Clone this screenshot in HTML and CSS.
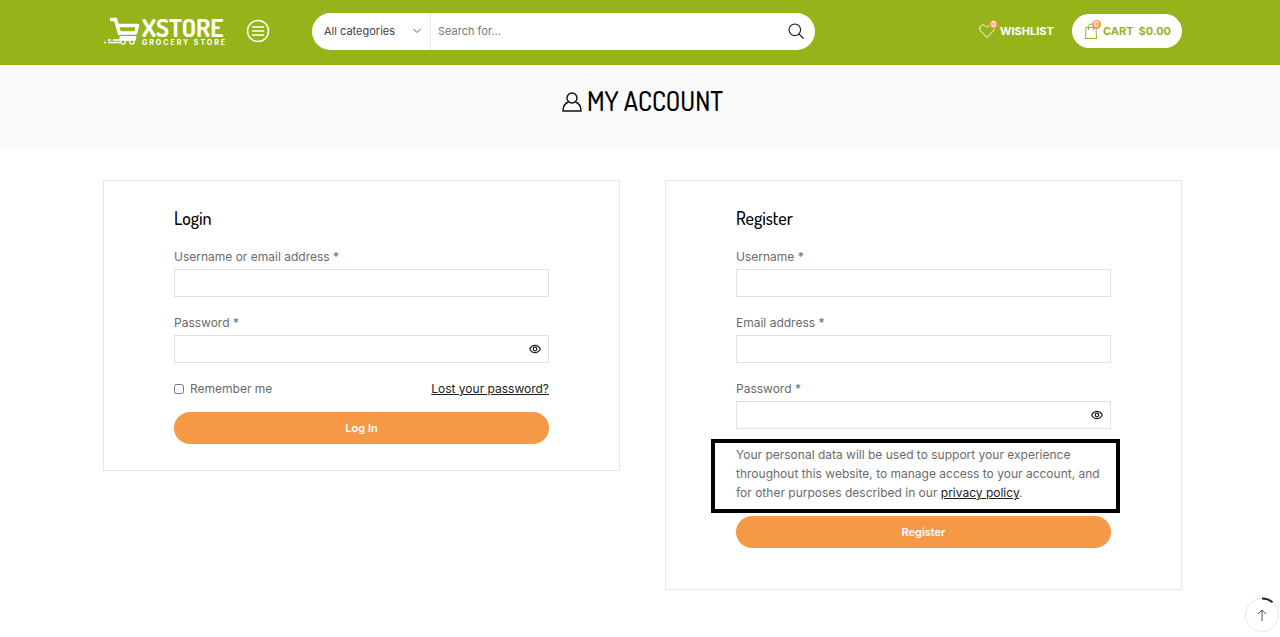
FILE: index.html
```html
<!DOCTYPE html>
<html lang="en">
<head>
    <meta charset="UTF-8">
    <meta name="viewport" content="width=device-width, initial-scale=1.0">
    <title>My Account</title>
    <link rel="stylesheet" href="styles.css">
</head>
<body>
    <header class="header">
        <a href="#" class="logo">
            <svg class="logo-cart" width="39" height="30" viewBox="0 0 39 30" fill="none" stroke="#fff">
                <path d="M7 3.500h5.500L17 19" stroke-width="3.500"/>
                <path d="M14.500 9.500h20l-2 7.500H17" stroke-width="3.500" stroke-linejoin="round"/>
                <path d="M17 13.300h15" stroke-width="1.500" stroke="#96b41a"/>
                <path d="M17 20.500h16l-1 4H17z" fill="#fff" stroke-width="1"/>
                <path d="M1 26.500h2M5 26.500h12M5 24h3M10 24h8" stroke-width="1.500"/>
                <circle cx="20" cy="26" r="2.200" stroke-width="1.200" fill="#96b41a"/>
                <circle cx="29" cy="26" r="2.200" stroke-width="1.200" fill="#96b41a"/>
            </svg>
            <span class="logo-text">
                <span class="logo-name">XSTORE</span>
                <span class="logo-tag">GROCERY STORE</span>
            </span>
        </a>

        <button type="button" class="menu-btn" aria-label="Menu">
            <svg width="24" height="24" viewBox="0 0 24 24" fill="none" stroke="#fff" stroke-width="1.500" stroke-linecap="round">
                <circle cx="12" cy="12" r="10.500"/>
                <path d="M6.500 8h11M6.500 12h11M6.500 16h11"/>
            </svg>
        </button>

        <form class="search">
            <select class="category" aria-label="Category">
                <option>All categories</option>
            </select>
            <svg class="chevron" width="8" height="6" viewBox="0 0 8 6" fill="none" stroke="#555">
                <path d="M.5 1L4 4.500 7.500 1"/>
            </svg>
            <input type="text" class="search-field" placeholder="Search for..." aria-label="Search">
            <button type="submit" class="search-btn" aria-label="Search">
                <svg width="16" height="16" viewBox="0 0 16 16" fill="none" stroke="#222" stroke-width="1.200">
                    <circle cx="6.800" cy="6.800" r="5.800"/>
                    <path d="M11 11l4.500 4.500"/>
                </svg>
            </button>
        </form>

        <div class="actions">
            <a href="#" class="wishlist">
                <span class="icon">
                    <svg width="16" height="16" viewBox="0 0 16 16" fill="none" stroke="#fff">
                        <path d="M8 14.500L1.700 8C.2 6.300.3 3.900 1.800 2.800 3.700 1.300 6.300 1.900 8 4.500c1.700-2.600 4.300-3.200 6.200-1.700 1.500 1.100 1.600 3.500.1 5.200z"/>
                    </svg>
                    <span class="badge">0</span>
                </span>
                WISHLIST
            </a>
            <a href="#" class="cart">
                <span class="icon">
                    <svg width="14" height="16" viewBox="0 0 14 16" fill="none" stroke="#96b41a">
                        <path d="M2 4.500h10l.5 11h-11zM4.500 7V3.500a2.500 2.500 0 0 1 5 0V7"/>
                    </svg>
                    <span class="badge">0</span>
                </span>
                <span>CART</span>
                <span>$0.00</span>
            </a>
        </div>
    </header>

    <div class="page-title">
        <svg width="20" height="20" viewBox="0 0 20 20" fill="none" stroke="#111" stroke-width="1.400">
            <circle cx="10" cy="6" r="5"/>
            <path d="M6.500 10C3 11.200 1 14.500 1 19h18c0-4.500-2-7.800-5.500-9"/>
        </svg>
        <h1>MY ACCOUNT</h1>
    </div>

    <main class="columns">
        <form class="card">
            <h2>Login</h2>
            <div class="field">
                <label for="login">Username or email address *</label>
                <input type="text" id="login">
            </div>
            <div class="field">
                <label for="loginPassword">Password *</label>
                <div class="password">
                    <input type="password" id="loginPassword">
                    <button type="button" class="eye" aria-label="Show password">
                        <svg width="12" height="10" viewBox="0 0 12 10" fill="none" stroke="#222" stroke-width="1.200">
                            <path d="M.7 5C3.200.1 8.800.1 11.300 5 8.800 9.900 3.200 9.900.7 5z"/>
                            <circle cx="6" cy="5" r="1.800"/>
                        </svg>
                    </button>
                </div>
            </div>
            <div class="options">
                <label class="remember"><input type="checkbox"> Remember me</label>
                <a href="#">Lost your password?</a>
            </div>
            <button type="submit" class="btn">Log In</button>
        </form>

        <form class="card card-register">
            <h2>Register</h2>
            <div class="field">
                <label for="username">Username *</label>
                <input type="text" id="username">
            </div>
            <div class="field">
                <label for="email">Email address *</label>
                <input type="email" id="email">
            </div>
            <div class="field">
                <label for="password">Password *</label>
                <div class="password">
                    <input type="password" id="password">
                    <button type="button" class="eye" aria-label="Show password">
                        <svg width="12" height="10" viewBox="0 0 12 10" fill="none" stroke="#222" stroke-width="1.200">
                            <path d="M.7 5C3.200.1 8.800.1 11.300 5 8.800 9.900 3.200 9.900.7 5z"/>
                            <circle cx="6" cy="5" r="1.800"/>
                        </svg>
                    </button>
                </div>
            </div>
            <p class="privacy">Your personal data will be used to support your experience throughout this website, to manage access to your account, and for other purposes described in our <a href="#">privacy policy</a>.</p>
            <button type="submit" class="btn">Register</button>
        </form>
    </main>

    <a href="#" class="to-top" aria-label="Back to top">
        <svg width="36" height="36" viewBox="0 0 36 36" fill="none">
            <circle cx="18" cy="18" r="16.500" fill="#fff" stroke="#e6e6e6"/>
            <path d="M18 1.500a16.500 16.500 0 0 1 10.500 3.700" stroke="#222" stroke-width="2"/>
            <path d="M18 24V13M14 17l4-4 4 4" stroke="#555"/>
        </svg>
    </a>
</body>
</html>
```
FILE: styles.css
```css
* {
    box-sizing: border-box;
}

body {
    margin: 0;
    background: #fff;
    color: #6b6b6b;
    font-family: Inter, 'Liberation Sans', sans-serif;
    font-size: 12px;
    line-height: 19px;
}

a {
    color: #222;
}

button {
    border: none;
    padding: 0;
    background: none;
    font-family: inherit;
    cursor: pointer;
}

svg {
    display: block;
}

h1,
h2 {
    margin: 0;
    color: #000;
    font-family: Dosis, Roboto, sans-serif;
    font-weight: 500;
}

.header {
    display: flex;
    align-items: center;
    height: 65px;
    padding: 0 98px 3px 103px;
    background: #96b41a;
}

.logo {
    display: flex;
    align-items: center;
    color: #fff;
    text-decoration: none;
}

.logo-text {
    display: flex;
    flex-direction: column;
    width: 82px;
}

.logo-name {
    font-family: Dosis, Roboto, sans-serif;
    font-size: 25px;
    font-weight: 700;
    line-height: 24px;
}

.logo-tag {
    font-size: 7px;
    font-weight: 700;
    letter-spacing: 2px;
    line-height: 8px;
    white-space: nowrap;
}

.menu-btn {
    margin: 0 42px 0 22px;
}

.search {
    display: flex;
    align-items: center;
    width: 503px;
    height: 37px;
    padding: 0 11px 0 12px;
    border-radius: 20px;
    background: #fff;
}

.category,
.search-field {
    border: none;
    background: none;
    font-family: inherit;
    font-size: 11px;
    outline: none;
}

.category {
    width: 89px;
    padding: 0;
    appearance: none;
    color: #444;
}

.chevron {
    margin: 0 9px 0 0;
}

.search-field {
    flex: 1;
    height: 37px;
    padding: 0 7px;
    border-left: 1px solid #e6e6e6;
}

.search-field::placeholder {
    color: #777;
}

.actions {
    display: flex;
    align-items: center;
    gap: 18px;
    margin-left: auto;
    font-size: 11px;
    font-weight: 700;
}

.wishlist,
.cart {
    display: flex;
    align-items: center;
    gap: 5px;
    color: #fff;
    text-decoration: none;
}

.cart {
    height: 34px;
    padding: 0 11px 0 12px;
    border-radius: 17px;
    background: #fff;
    color: #96b41a;
}

.icon {
    position: relative;
}

.badge {
    position: absolute;
    top: -3px;
    right: -3px;
    width: 9px;
    height: 9px;
    border-radius: 50%;
    background: #f69946;
    color: #fff;
    font-size: 7px;
    line-height: 9px;
    text-align: center;
}

.page-title {
    display: flex;
    justify-content: center;
    align-items: center;
    gap: 5px;
    height: 84px;
    padding: 0 0 10px 5px;
    background: #fafafa;
}

.page-title h1 {
    margin-bottom: 2px;
    font-size: 26px;
    line-height: 32px;
}

.columns {
    display: grid;
    grid-template-columns: 1fr 1fr;
    align-items: start;
    gap: 45px;
    padding: 31px 98px 40px 103px;
}

.card {
    padding: 25px 70px 26px;
    border: 1px solid #e6e6e6;
}

.card-register {
    padding-bottom: 41px;
}

.card h2 {
    margin-bottom: 17px;
    font-size: 18px;
    line-height: 24px;
}

.field {
    display: flex;
    flex-direction: column;
    gap: 3px;
    margin-bottom: 16px;
}

.field input {
    width: 100%;
    height: 28px;
    padding: 0 10px;
    border: 1px solid #e1e1e1;
    background: #fff;
    font-family: inherit;
    font-size: 12px;
}

.password {
    position: relative;
}

.eye {
    position: absolute;
    top: 9px;
    right: 8px;
}

.options {
    display: flex;
    justify-content: space-between;
    margin-bottom: 14px;
}

.remember {
    display: flex;
    align-items: center;
    gap: 6px;
}

.remember input {
    width: 10px;
    height: 10px;
    margin: 0;
}

.btn {
    display: block;
    width: 100%;
    height: 32px;
    border-radius: 16px;
    background: #f69946;
    color: #fff;
    font-size: 11px;
    font-weight: 600;
}

.privacy {
    position: relative;
    margin: 0 0 14px;
}

.privacy::after {
    content: '';
    position: absolute;
    inset: -6px -9px -11px -25px;
    border: 4px solid #000;
    pointer-events: none;
}

.to-top {
    position: fixed;
    right: 0;
    bottom: 4px;
}
```
